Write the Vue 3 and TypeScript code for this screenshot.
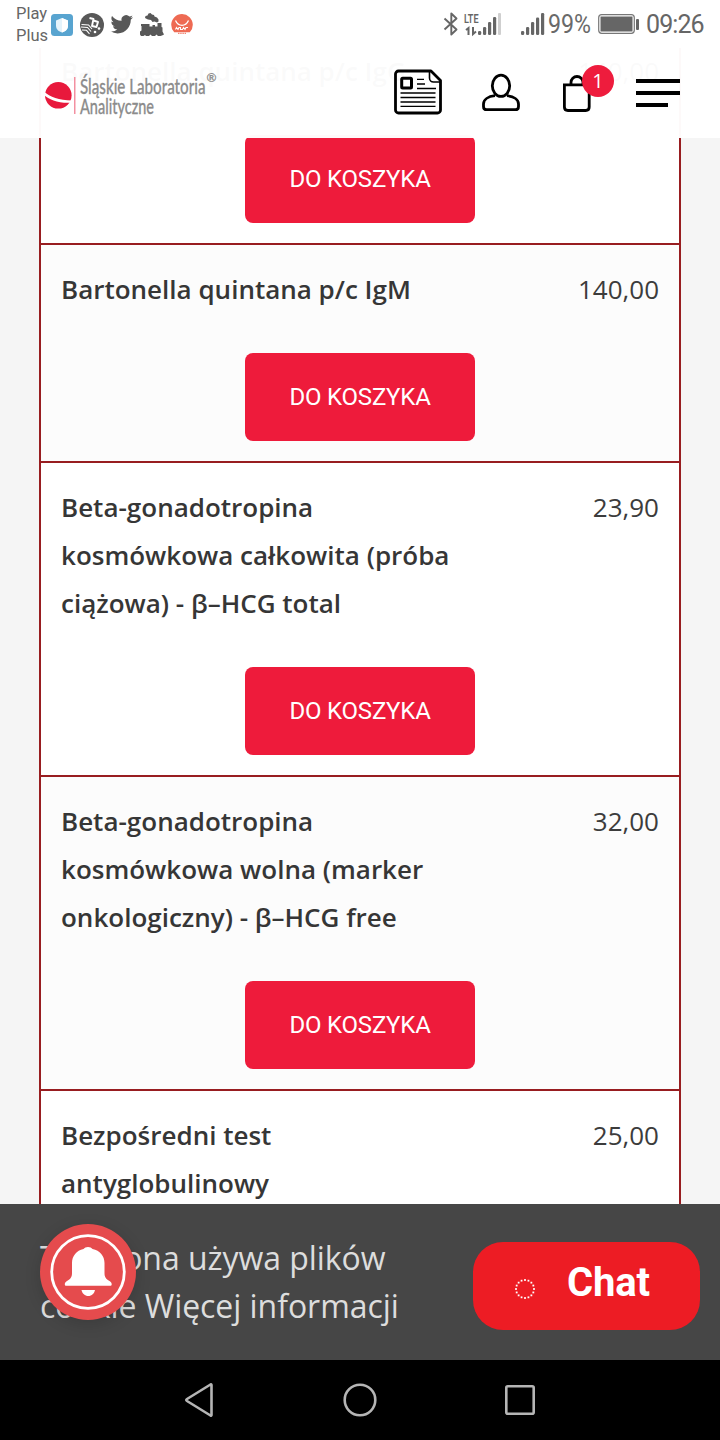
<script setup lang="ts">
interface Product {
  lines: string[]
  price: string
}

const products: Product[] = [
  { lines: ['Bartonella quintana p/c IgG'], price: '140,00' },
  { lines: ['Bartonella quintana p/c IgM'], price: '140,00' },
  { lines: ['Beta-gonadotropina', 'kosmówkowa całkowita (próba', 'ciążowa) - β–HCG total'], price: '23,90' },
  { lines: ['Beta-gonadotropina', 'kosmówkowa wolna (marker', 'onkologiczny) - β–HCG free'], price: '32,00' },
  { lines: ['Bezpośredni test', 'antyglobulinowy'], price: '25,00' },
]

// Dots of the loading ring
const dots = Array.from({ length: 16 }, (_, i) => {
  const a = (i * Math.PI) / 8
  return { x: 11 + 9 * Math.cos(a), y: 11 + 9 * Math.sin(a) }
})
</script>

<template>
  <div class="phone">
    <header class="status">
      <div class="carrier"><span>Play</span><span>Plus</span></div>
      <svg class="notifications" width="144" height="48" viewBox="50 0 144 48">
        <rect x="51" y="14" width="22" height="22" rx="3.5" fill="#58a4d0" />
        <path d="M62 18l6 2.500v5c0 4-3 6-6 7-3-1-6-3-6-7v-5z" fill="#e4f3fb" />
        <path d="M62 18l6 2.500v5c0 4-3 6-6 7z" fill="#fff" />
        <circle cx="92" cy="25" r="12" fill="#585858" />
        <g fill="none" stroke="#fff">
          <path d="M89.500 18l4 1-1.500 7 4.500 1 1.500-5-4.500-1.500" stroke-width="1.900" stroke-linejoin="round" />
          <path d="M81.500 24.500l7 .5 3.500 4M81 27l6.500.5 3.500 4M82 30l4.500.3 3 3.500" stroke-width="1.100" />
        </g>
        <circle cx="99" cy="28.500" r="1.300" fill="#fff" /><circle cx="95" cy="32" r="1.300" fill="#fff" />
        <path transform="translate(110.500 13) scale(.94)" fill="#585858" d="M23.950 4.570a10 10 0 0 1-2.820.77 4.960 4.960 0 0 0 2.160-2.720c-.95.560-2 .96-3.130 1.190a4.920 4.920 0 0 0-8.380 4.480C7.690 8.100 4.070 6.130 1.640 3.160a4.820 4.820 0 0 0-.67 2.480c0 1.710.87 3.210 2.190 4.100a4.900 4.900 0 0 1-2.230-.62v.06a4.920 4.920 0 0 0 3.950 4.830 5 5 0 0 1-2.210.080 4.940 4.940 0 0 0 4.600 3.420A9.870 9.870 0 0 1 0 19.540a14 14 0 0 0 7.550 2.210c9.050 0 14-7.500 14-13.980 0-.21 0-.42-.020-.63a9.940 9.940 0 0 0 2.460-2.550z" />
        <path fill="#585858" d="M148.500 13.500l2-.5 1.500 1.500 2 .5.5 1.500 2.500 1 1.500 2v2l-1.500 1-2.500-1-2 .5-1.500-2-3-.5-3-1.500.5-2 2-.5z" />
        <path fill="#585858" d="M141 24h8.500v2.500h3V25h2.500v1.500h2.500V23h4v4l1 .5v4l1.500 3-2 1-1.500.5h-2.500l-1.500-1.500-1.500 1.500h-3l-1.500-1.500-1.500 1.500h-3l-1-1-1.500 1h-2.500l-1-1.500v-3l1.500-1v-4.500h-.5z" />
        <path d="M174.200 32.300a10.800 10.800 0 1 1 15.600 0z" fill="#ee6a53" />
        <path d="M175.500 20.500c1.500 3.300 3.700 4.800 6.500 4.800s5-1.500 6.500-4.800" fill="none" stroke="#fff" stroke-width="1.300" />
        <path d="M175.500 29.500l1-2 1.500 2 1-2h1.500v2h2l1-2 1.500 2 1-2h2" fill="none" stroke="#fff" stroke-width="1.100" />
        <path d="M178 33.300h8" stroke="#ee6a53" stroke-width="1" stroke-dasharray="1.500 .7" />
      </svg>
      <svg class="signals" width="206" height="48" viewBox="436 0 206 48">
        <path d="M444.500 18.500l12 11-5.200 5V13.500l5.200 5-12 11" fill="none" stroke="#666" stroke-width="1.900" stroke-linejoin="round" />
        <text x="464" y="22.700" class="lte" textLength="14.500" lengthAdjust="spacingAndGlyphs">LTE</text>
        <path d="M466 30l2.500-2v7M473 27v7l3-2.500" fill="none" stroke="#666" stroke-width="2" />
        <g fill="#666">
          <rect x="478" y="31" width="3.200" height="4" rx="1.300" /><rect x="483" y="27" width="3.200" height="8" rx="1.300" /><rect x="488" y="22" width="3.200" height="13" rx="1.300" /><rect x="493" y="17" width="3.200" height="18" rx="1.300" />
          <rect x="521" y="31" width="3.200" height="4" rx="1.300" /><rect x="526" y="27" width="3.200" height="8" rx="1.300" /><rect x="531" y="22" width="3.200" height="13" rx="1.300" /><rect x="536" y="17.500" width="3.200" height="17.500" rx="1.300" /><rect x="541" y="13" width="3.200" height="22" rx="1.300" />
          <rect x="600.500" y="16.500" width="32" height="15" />
          <rect x="636" y="19" width="3" height="11" rx="1" />
        </g>
        <rect x="498" y="13" width="3" height="22" rx="1" fill="#cfcfcf" />
        <text x="548" y="33" class="charge" textLength="43" lengthAdjust="spacingAndGlyphs">99%</text>
        <rect x="598.700" y="14.700" width="35.600" height="18.600" rx="3" fill="none" stroke="#777" stroke-width="1.200" />
      </svg>
      <span class="clock">09:26</span>
    </header>

    <main class="page">
      <div class="table">
        <article v-for="p in products" :key="p.lines.join()" class="row">
          <div class="info">
            <h2 class="name"><span v-for="l in p.lines" :key="l">{{ l }}</span></h2>
            <span class="price">{{ p.price }}</span>
          </div>
          <button class="buy" type="button">DO KOSZYKA</button>
        </article>
      </div>

      <div class="topbar">
        <svg width="720" height="90" viewBox="0 48 720 90">
          <circle cx="58.300" cy="95.300" r="13.300" fill="#e8193c" />
          <path d="M44 91.500c6 5.500 15 8.500 28 9v2.200c-13 1-23-3-28-7.700z" fill="#fff" />
          <path d="M74.800 77v37" stroke="#f0758a" stroke-width="1.200" />
          <g class="brand">
            <text x="80" y="94" textLength="125.500" lengthAdjust="spacingAndGlyphs">Śląskie Laboratoria</text>
            <text x="80" y="114.300" textLength="74" lengthAdjust="spacingAndGlyphs">Analityczne</text>
            <text x="206.500" y="82" class="reg">®</text>
          </g>
          <g fill="none" stroke="#000">
            <path d="M431 71H398.500a3 3 0 0 0-3 3v36a3 3 0 0 0 3 3h39a3 3 0 0 0 3-3V80.500z" stroke-width="2.800" stroke-linejoin="round" />
            <path d="M429.500 71v7a4 4 0 0 0 4 4h7" stroke-width="1.600" />
            <rect x="401.700" y="78.200" width="9.800" height="9.800" rx="1" stroke-width="3" />
            <path d="M417 79.300h7M417 84h8M417 88.500h19M400.500 93h35M400.500 97.500h35M400.500 102h35M400.500 106.300h35" stroke-width="1.300" />
            <ellipse cx="501" cy="85.800" rx="8.700" ry="10.600" stroke-width="2.800" />
            <path d="M495 95.700c-7 .8-11.500 4-11.500 8.200v2.500q0 3.300 3.300 3.300h28.400q3.300 0 3.300-3.300v-2.500c0-4.200-4.500-7.400-11.500-8.200" stroke-width="2.800" />
            <path d="M564.400 84.800h24.800v22.200q0 3.500-3.500 3.500h-17.800q-3.500 0-3.500-3.500z" stroke-width="2.800" />
            <path d="M571 84v-1.500a6 6 0 0 1 12 0v1.500" stroke-width="2.800" />
            <path d="M636 81h44M636 93h44M636 105h32" stroke-width="4" />
          </g>
          <circle cx="598" cy="81" r="16" fill="#ee1c3d" />
          <text x="598" y="87.500" class="badge" text-anchor="middle">1</text>
        </svg>
      </div>

      <div class="cookies">
        <p><span>Ta strona używa plików</span><span>cookie Więcej informacji</span></p>
        <button class="chat" type="button">
          <svg width="22" height="22" viewBox="0 0 22 22">
            <rect v-for="(d, i) in dots" :key="i" :x="d.x - 0.9" :y="d.y - 0.9" width="1.800" height="1.800" fill="#fff" />
          </svg>
          <span>Chat</span>
        </button>
        <div class="bell">
          <svg width="96" height="96" viewBox="0 0 96 96">
            <circle cx="48" cy="48" r="36.300" fill="none" stroke="#fff" stroke-width="2.800" />
            <path d="M48 23c2 0 3.500.8 4.500 2C60 26.500 64.500 32 64.500 39v10c0 4 1.500 6 5 8 1.500 1 2.200 2 2.200 3.200 0 1-.5 1.500-1.700 1.500H26.500c-1.200 0-1.700-.5-1.700-1.500 0-1.200.7-2.200 2.200-3.200 3.500-2 5-4 5-8V39c0-7 4.500-12.500 11.500-14 1-1.200 2.500-2 4.500-2z" fill="#fff" />
            <path d="M41.500 66h13.500c-.7 3.500-3.300 6-6.700 6s-6.100-2.500-6.800-6z" fill="#fff" />
          </svg>
        </div>
      </div>
    </main>

    <nav class="keys">
      <svg width="36" height="36" viewBox="0 0 36 36"><path d="M29.500 3v30q0 1-1 .5L5 19q-1.500-1 0-2L28.500 2.500q1-.5 1 .5z" /></svg>
      <svg width="36" height="36" viewBox="0 0 36 36"><circle cx="18" cy="18" r="15.300" /></svg>
      <svg width="36" height="36" viewBox="0 0 36 36"><rect x="4.300" y="4.300" width="27.400" height="27.400" rx="1.500" /></svg>
    </nav>
  </div>
</template>

<style>
body {
  margin: 0;
}
</style>

<style scoped>
.phone {
  width: 720px;
  height: 1440px;
  display: grid;
  grid-template-rows: 48px 1312px 80px;
  overflow: hidden;
  background: #f5f5f5;
  font-family: "Open Sans", "Noto Sans", sans-serif;
}
.status {
  display: flex;
  align-items: center;
  background: #fff;
  color: #666;
  font-family: Roboto, sans-serif;
}
.carrier {
  width: 34px;
  padding-left: 16px;
  font-size: 16.500px;
  line-height: 22px;
  display: flex;
  flex-direction: column;
  margin-top: 1px;
}
.signals {
  margin-left: 242px;
}
.lte {
  font: 600 13px Roboto, sans-serif;
  fill: #666;
}
.charge {
  font: 400 25px Roboto, sans-serif;
  fill: #6a6a6a;
}
.clock {
  margin-left: 4px;
  font-size: 25px;
  letter-spacing: -0.900px;
}
.page {
  position: relative;
  overflow: hidden;
}
.table {
  margin: -23px 39px 0;
  border: solid #981d20;
  border-width: 0 2px;
}
.row {
  display: flex;
  flex-direction: column;
  align-items: center;
  border-top: 2px solid #981d20;
  padding: 20px 20px 20px;
  background: #fff;
}
.row:nth-child(even) {
  background: #fcfcfc;
}
.info {
  align-self: stretch;
  display: flex;
  justify-content: space-between;
  margin-bottom: 40px;
  font-size: 26px;
  line-height: 48px;
  color: #3c3c3c;
}
.name {
  margin: 0;
  font-size: 26px;
  font-weight: 600;
  color: #363636;
  display: flex;
  flex-direction: column;
  white-space: nowrap;
}
.buy {
  width: 230px;
  height: 88px;
  border: 0;
  border-radius: 8px;
  padding: 0;
  background: #ee1b3b;
  color: #fff;
  font: 400 24px Roboto, sans-serif;
  letter-spacing: -0.200px;
}
.topbar {
  position: absolute;
  inset: 0 0 auto;
  height: 90px;
  background: rgba(255, 255, 255, 0.975);
}
.topbar svg {
  display: block;
}
.brand {
  font: 500 22px Lato, sans-serif;
  fill: #8c8c8c;
  stroke: #8c8c8c;
  stroke-width: 0.300;
}
.reg {
  font-size: 12px;
}
.badge {
  font: 400 20px "Open Sans", sans-serif;
  fill: #fff;
}
.cookies {
  position: absolute;
  inset: auto 0 0;
  height: 156px;
  box-sizing: border-box;
  padding: 0 20px 0 40px;
  display: flex;
  align-items: center;
  justify-content: space-between;
  background: #464646;
}
.cookies p {
  margin: 0;
  display: flex;
  flex-direction: column;
  font-size: 32px;
  line-height: 48px;
  color: #ddd;
  white-space: nowrap;
  letter-spacing: -0.050px;
}
.chat {
  width: 227px;
  height: 88px;
  margin-top: 8px;
  border: 0;
  border-radius: 30px;
  padding: 0 0 0 41px;
  display: flex;
  align-items: center;
  gap: 31px;
  background: #ed1c24;
  color: #fff;
  font: 700 40px Roboto, sans-serif;
  letter-spacing: -0.200px;
}
.chat svg {
  margin-top: 6px;
}
.chat span {
  margin-top: -8px;
}
.bell {
  position: absolute;
  left: 40px;
  top: 20px;
  width: 96px;
  height: 96px;
  border-radius: 50%;
  background: #e54b4d;
  box-shadow: 0 4px 16px rgba(0, 0, 0, 0.15);
}
.keys {
  display: flex;
  align-items: center;
  justify-content: center;
  gap: 124px;
  background: #000;
}
.keys path,
.keys circle,
.keys rect {
  fill: none;
  stroke: #b5b5b5;
  stroke-width: 2.600;
  stroke-linejoin: round;
}
</style>
